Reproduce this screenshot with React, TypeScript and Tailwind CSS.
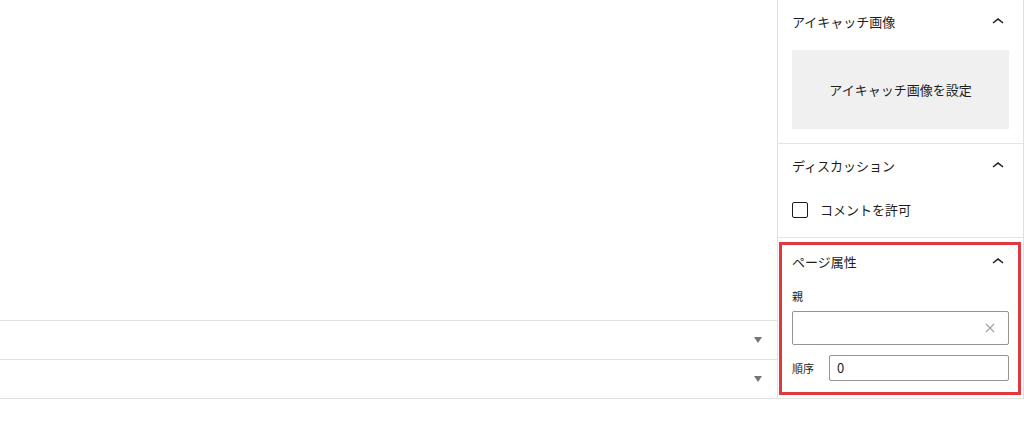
import React from 'react';

const font = { fontFamily: '"Noto Sans CJK JP", "Noto Sans", sans-serif' };

const ChevronUp: React.FC = () => (
  <svg width="24" height="24" viewBox="0 0 24 24" className="text-[#1e1e1e]">
    <path d="M6.5 12.4L12 8l5.5 4.4-.9 1.2L12 10l-4.6 3.6-.9-1.2z" fill="currentColor" />
  </svg>
);

const Caret: React.FC = () => (
  <svg width="8" height="6" viewBox="0 0 8 6">
    <path d="M0 0h8L4 6z" fill="#757575" />
  </svg>
);

const PanelHeader: React.FC<{ title: string; h: string }> = ({ title, h }) => (
  <div className={`flex items-center justify-between ${h}`}>
    <span className="text-[13px] text-[#1e1e1e]">{title}</span>
    <span className="mr-[-1px]"><ChevronUp /></span>
  </div>
);

export default function App() {
  return (
    <div className="flex h-[421px] w-[1024px] bg-white overflow-hidden" style={font}>
      {/* Main editor area */}
      <div className="flex-1 flex flex-col pt-[320px]">
        {[0, 1].map((i) => (
          <div key={i} className="h-[39px] border-t border-[#e2e2e2] flex items-center justify-end pr-[15px]">
            <Caret />
          </div>
        ))}
        <div className="border-t border-[#e2e2e2]" />
      </div>

      {/* Settings sidebar */}
      <div className="w-[247px] h-[399px] border-l border-r border-b border-[#e0e0e0] flex flex-col">
        <section className="px-[14px] pb-[14px] border-b border-[#e4e4e4]">
          <PanelHeader title="アイキャッチ画像" h="h-[44px]" />
          <div className="mt-[6px] h-[79px] bg-[#f0f0f0] flex items-center justify-center text-[13px] text-[#1e1e1e]">
            アイキャッチ画像を設定
          </div>
        </section>

        <section className="px-[14px] pb-[19px] border-b border-[#e4e4e4]">
          <PanelHeader title="ディスカッション" h="h-[44px]" />
          <label className="mt-[14px] h-[16px] flex items-center gap-[12px] leading-[16px]">
            <span className="w-[16px] h-[16px] border border-[#1e1e1e] rounded-[2px]" />
            <span className="text-[13px] text-[#1e1e1e]">コメントを許可</span>
          </label>
        </section>

        <section className="mt-[4px] ml-[1px] mr-[2px] border-[3px] border-[#e0383e] pl-[10px] pr-[9px] pb-[11px]">
          <PanelHeader title="ページ属性" h="h-[34px]" />
          <div className="mt-[9px] h-[16px] text-[11px] text-[#1e1e1e] leading-[16px]">親</div>
          <div className="mt-[7px] h-[34px] border border-[#949494] rounded-[2px] flex items-center justify-end pr-[13px]">
            <svg width="10" height="10" viewBox="0 0 10 10">
              <path d="M1 1l8 8M9 1l-8 8" stroke="#a0a0a0" strokeWidth="1.1" />
            </svg>
          </div>
          <div className="mt-[10px] h-[26px] flex items-center">
            <span className="w-[37px] text-[11px] text-[#1e1e1e]">順序</span>
            <div className="flex-1 h-[26px] border border-[#949494] rounded-[2px] flex items-center pl-[7px] text-[13px] text-[#1e1e1e]">
              0
            </div>
          </div>
        </section>
      </div>
    </div>
  );
}
